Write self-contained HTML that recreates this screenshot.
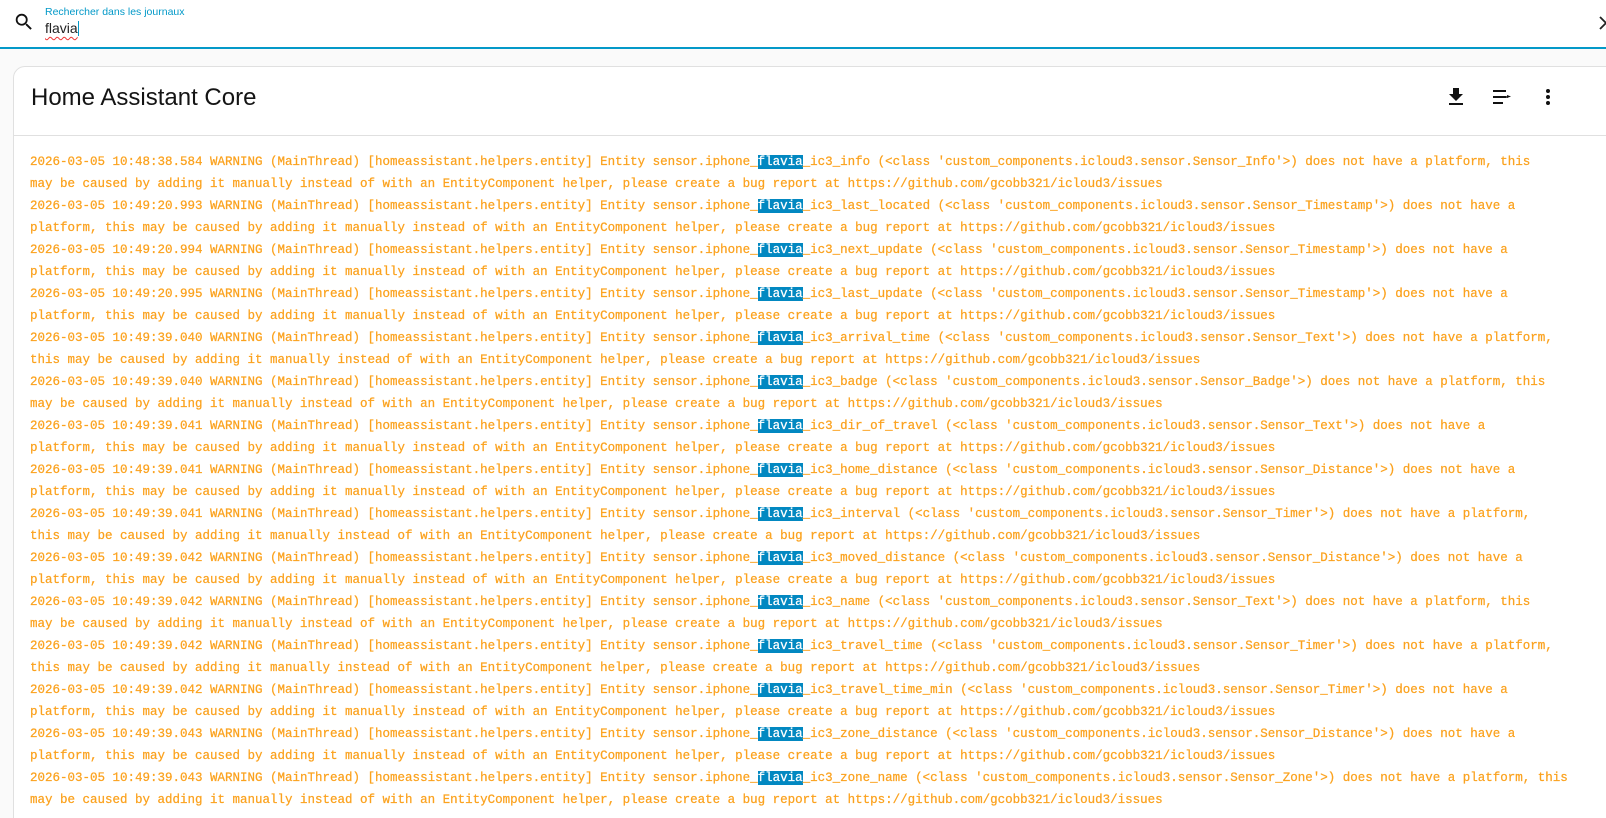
<!DOCTYPE html>
<html style="overflow:hidden;height:818px"><head><meta charset="utf-8"><style>
*{margin:0;padding:0;box-sizing:border-box}
body{width:1606px;height:818px;overflow:hidden;background:#fafafa;font-family:"Liberation Sans",sans-serif;position:relative}
.top{position:absolute;left:0;top:0;width:1606px;height:49px;background:#fff;border-bottom:2px solid #0399c8}
.lbl{position:absolute;left:45px;top:6px;font-size:10.5px;color:#0399c8}
.val{position:absolute;left:45px;top:20px;font-size:14px;color:#222}
.val span{text-decoration:underline wavy #e33;text-underline-offset:3px;text-decoration-thickness:1px}
.cur{display:inline-block;width:1px;height:15px;background:#0399c8;vertical-align:-3px}
.card{position:absolute;left:13px;top:66px;width:1620px;height:770px;background:#fff;border:1px solid #e0e0e0;border-radius:12px;overflow:hidden}
.title{position:absolute;left:17px;top:17px;font-size:24px;color:#141414}
.div{position:absolute;left:0;right:0;top:68px;border-top:1px solid #e0e0e0}
.log{position:absolute;left:16px;top:84px;font-family:"Liberation Mono",monospace;font-size:12.5px;line-height:22px;color:#fba21e;white-space:pre;-webkit-text-stroke:0.25px #fba21e}
.log b{font-weight:normal;background:#0288c1;color:#fff;-webkit-text-stroke:0.25px #fff}
svg{position:absolute}
</style></head><body>
<div class="top">
<svg style="left:13px;top:11px" width="22" height="22" viewBox="0 0 24 24"><path fill="#111" d="M9.5 3A6.5 6.5 0 0 1 16 9.5c0 1.610-.59 3.090-1.560 4.230l.27.27h.79l5 5-1.500 1.500-5-5v-.79l-.27-.27A6.516 6.516 0 0 1 9.500 16 6.500 6.500 0 0 1 3 9.500 6.500 6.500 0 0 1 9.500 3m0 2C7 5 5 7 5 9.500S7 14 9.500 14 14 12 14 9.500 12 5 9.500 5z"/></svg>
<div class="lbl">Rechercher dans les journaux</div>
<div class="val"><span>flavia</span><i class="cur"></i></div>
<svg style="left:1598px;top:16px" width="10" height="14" viewBox="0 0 10 14"><path d="M2 1l6 6-6 6" stroke="#222" stroke-width="1.8" fill="none"/></svg>
</div>
<div class="card">
<div class="title">Home Assistant Core</div>
<svg style="left:1430px;top:18px" width="24" height="24" viewBox="0 0 24 24"><path fill="#111" d="M5 20h14v-2H5m14-9h-4V3H9v6H5l7 7 7-7z"/></svg>
<svg style="left:1476px;top:18px" width="24" height="24" viewBox="0 0 24 24"><path fill="#111" d="M3 5h13v2H3zm0 6h13v2H3zm0 6h10v2H3zm14-4l4-1.500-4-1.500v1.500z"/><path d="M14 12h4" stroke="#111" stroke-width="1.6"/></svg>
<svg style="left:1522px;top:18px" width="24" height="24" viewBox="0 0 24 24"><path fill="#111" d="M12 16a2 2 0 1 1 0 4 2 2 0 0 1 0-4m0-6a2 2 0 1 1 0 4 2 2 0 0 1 0-4m0-6a2 2 0 1 1 0 4 2 2 0 0 1 0-4z"/></svg>
<div class="div"></div>
<div class="log">2026-03-05 10:48:38.584 WARNING (MainThread) [homeassistant.helpers.entity] Entity sensor.iphone_<b>flavia</b>_ic3_info (&lt;class 'custom_components.icloud3.sensor.Sensor_Info'&gt;) does not have a platform, this
may be caused by adding it manually instead of with an EntityComponent helper, please create a bug report at https://github.com/gcobb321/icloud3/issues
2026-03-05 10:49:20.993 WARNING (MainThread) [homeassistant.helpers.entity] Entity sensor.iphone_<b>flavia</b>_ic3_last_located (&lt;class 'custom_components.icloud3.sensor.Sensor_Timestamp'&gt;) does not have a
platform, this may be caused by adding it manually instead of with an EntityComponent helper, please create a bug report at https://github.com/gcobb321/icloud3/issues
2026-03-05 10:49:20.994 WARNING (MainThread) [homeassistant.helpers.entity] Entity sensor.iphone_<b>flavia</b>_ic3_next_update (&lt;class 'custom_components.icloud3.sensor.Sensor_Timestamp'&gt;) does not have a
platform, this may be caused by adding it manually instead of with an EntityComponent helper, please create a bug report at https://github.com/gcobb321/icloud3/issues
2026-03-05 10:49:20.995 WARNING (MainThread) [homeassistant.helpers.entity] Entity sensor.iphone_<b>flavia</b>_ic3_last_update (&lt;class 'custom_components.icloud3.sensor.Sensor_Timestamp'&gt;) does not have a
platform, this may be caused by adding it manually instead of with an EntityComponent helper, please create a bug report at https://github.com/gcobb321/icloud3/issues
2026-03-05 10:49:39.040 WARNING (MainThread) [homeassistant.helpers.entity] Entity sensor.iphone_<b>flavia</b>_ic3_arrival_time (&lt;class 'custom_components.icloud3.sensor.Sensor_Text'&gt;) does not have a platform,
this may be caused by adding it manually instead of with an EntityComponent helper, please create a bug report at https://github.com/gcobb321/icloud3/issues
2026-03-05 10:49:39.040 WARNING (MainThread) [homeassistant.helpers.entity] Entity sensor.iphone_<b>flavia</b>_ic3_badge (&lt;class 'custom_components.icloud3.sensor.Sensor_Badge'&gt;) does not have a platform, this
may be caused by adding it manually instead of with an EntityComponent helper, please create a bug report at https://github.com/gcobb321/icloud3/issues
2026-03-05 10:49:39.041 WARNING (MainThread) [homeassistant.helpers.entity] Entity sensor.iphone_<b>flavia</b>_ic3_dir_of_travel (&lt;class 'custom_components.icloud3.sensor.Sensor_Text'&gt;) does not have a
platform, this may be caused by adding it manually instead of with an EntityComponent helper, please create a bug report at https://github.com/gcobb321/icloud3/issues
2026-03-05 10:49:39.041 WARNING (MainThread) [homeassistant.helpers.entity] Entity sensor.iphone_<b>flavia</b>_ic3_home_distance (&lt;class 'custom_components.icloud3.sensor.Sensor_Distance'&gt;) does not have a
platform, this may be caused by adding it manually instead of with an EntityComponent helper, please create a bug report at https://github.com/gcobb321/icloud3/issues
2026-03-05 10:49:39.041 WARNING (MainThread) [homeassistant.helpers.entity] Entity sensor.iphone_<b>flavia</b>_ic3_interval (&lt;class 'custom_components.icloud3.sensor.Sensor_Timer'&gt;) does not have a platform,
this may be caused by adding it manually instead of with an EntityComponent helper, please create a bug report at https://github.com/gcobb321/icloud3/issues
2026-03-05 10:49:39.042 WARNING (MainThread) [homeassistant.helpers.entity] Entity sensor.iphone_<b>flavia</b>_ic3_moved_distance (&lt;class 'custom_components.icloud3.sensor.Sensor_Distance'&gt;) does not have a
platform, this may be caused by adding it manually instead of with an EntityComponent helper, please create a bug report at https://github.com/gcobb321/icloud3/issues
2026-03-05 10:49:39.042 WARNING (MainThread) [homeassistant.helpers.entity] Entity sensor.iphone_<b>flavia</b>_ic3_name (&lt;class 'custom_components.icloud3.sensor.Sensor_Text'&gt;) does not have a platform, this
may be caused by adding it manually instead of with an EntityComponent helper, please create a bug report at https://github.com/gcobb321/icloud3/issues
2026-03-05 10:49:39.042 WARNING (MainThread) [homeassistant.helpers.entity] Entity sensor.iphone_<b>flavia</b>_ic3_travel_time (&lt;class 'custom_components.icloud3.sensor.Sensor_Timer'&gt;) does not have a platform,
this may be caused by adding it manually instead of with an EntityComponent helper, please create a bug report at https://github.com/gcobb321/icloud3/issues
2026-03-05 10:49:39.042 WARNING (MainThread) [homeassistant.helpers.entity] Entity sensor.iphone_<b>flavia</b>_ic3_travel_time_min (&lt;class 'custom_components.icloud3.sensor.Sensor_Timer'&gt;) does not have a
platform, this may be caused by adding it manually instead of with an EntityComponent helper, please create a bug report at https://github.com/gcobb321/icloud3/issues
2026-03-05 10:49:39.043 WARNING (MainThread) [homeassistant.helpers.entity] Entity sensor.iphone_<b>flavia</b>_ic3_zone_distance (&lt;class 'custom_components.icloud3.sensor.Sensor_Distance'&gt;) does not have a
platform, this may be caused by adding it manually instead of with an EntityComponent helper, please create a bug report at https://github.com/gcobb321/icloud3/issues
2026-03-05 10:49:39.043 WARNING (MainThread) [homeassistant.helpers.entity] Entity sensor.iphone_<b>flavia</b>_ic3_zone_name (&lt;class 'custom_components.icloud3.sensor.Sensor_Zone'&gt;) does not have a platform, this
may be caused by adding it manually instead of with an EntityComponent helper, please create a bug report at https://github.com/gcobb321/icloud3/issues</div>
</div>
</body></html>
